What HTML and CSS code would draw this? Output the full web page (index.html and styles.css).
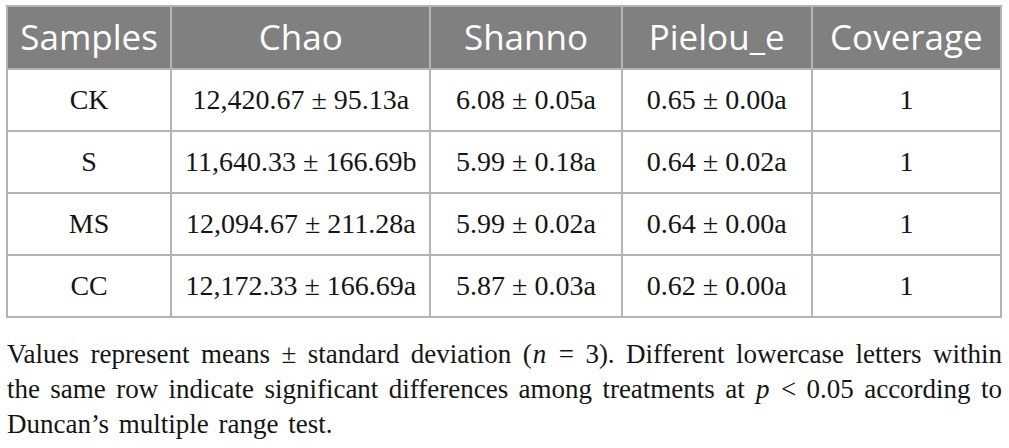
FILE: index.html
```html
<!DOCTYPE html>
<html>
<head>
<meta charset="utf-8">
<link rel="stylesheet" href="styles.css">
</head>
<body>
<div class="page">
  <table class="data">
    <colgroup>
      <col class="c1"><col class="c2"><col class="c3"><col class="c4"><col class="c5">
    </colgroup>
    <thead>
      <tr><th>Samples</th><th>Chao</th><th>Shanno</th><th>Pielou_e</th><th>Coverage</th></tr>
    </thead>
    <tbody>
      <tr><td>CK</td><td>12,420.67 ± 95.13a</td><td>6.08 ± 0.05a</td><td>0.65 ± 0.00a</td><td>1</td></tr>
      <tr><td>S</td><td>11,640.33 ± 166.69b</td><td>5.99 ± 0.18a</td><td>0.64 ± 0.02a</td><td>1</td></tr>
      <tr><td>MS</td><td>12,094.67 ± 211.28a</td><td>5.99 ± 0.02a</td><td>0.64 ± 0.00a</td><td>1</td></tr>
      <tr><td>CC</td><td>12,172.33 ± 166.69a</td><td>5.87 ± 0.03a</td><td>0.62 ± 0.00a</td><td>1</td></tr>
    </tbody>
  </table>
  <p class="note">Values represent means ± standard deviation (<i class="var">n</i> = 3). Different lowercase letters within the same row indicate significant differences among treatments at <i class="var">p</i> &lt; 0.05 according to Duncan’s multiple range test.</p>
</div>
</body>
</html>
```

FILE: styles.css
```css
html, body {
  margin: 0;
  padding: 0;
  background: #ffffff;
}

.page {
  padding: 5px 7px 0 6px;
}

.data {
  border-collapse: collapse;
  table-layout: fixed;
  width: 996px;
  border: 2px solid #b4b4b4;
}

.c1 { width: 164px; }
.c2 { width: 259px; }
.c3 { width: 191px; }
.c4 { width: 190px; }
.c5 { width: 189px; }

.data th,
.data td {
  border: 2px solid #b4b4b4;
  text-align: center;
  padding: 0;
  white-space: nowrap;
}

.data th {
  background: #808080;
  color: #ffffff;
  font-family: "Open Sans", "Noto Sans", sans-serif;
  font-weight: 400;
  font-size: 35px;
  height: 61px;
  line-height: 1.1;
}

.data td {
  font-family: "Liberation Serif", serif;
  font-size: 28px;
  color: #151515;
  height: 60px;
  line-height: 1.15;
}

.note {
  margin: 19px 0 0 1px;
  font-family: "Liberation Serif", serif;
  font-size: 27px;
  line-height: 35px;
  word-spacing: 3px;
  color: #151515;
  text-align: justify;
}

.var {
  padding: 0 1px;
}
```
